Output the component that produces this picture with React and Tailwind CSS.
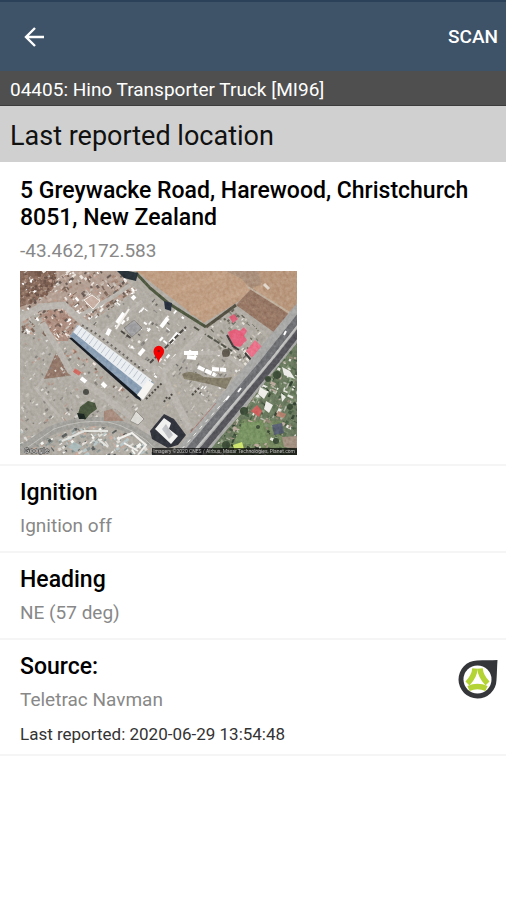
import React from 'react';

const details = [
  { title: 'Ignition', value: 'Ignition off' },
  { title: 'Heading', value: 'NE (57 deg)' },
];

// patches of small objects scattered over the yards, roads and gardens
const patches = [
  { id: 'yard-nw', area: '0,0 98,0 118,20 56,60 46,68 0,62', count: 620, size: 4, angle: -38, colors: ['#ece6e0', '#a88a7a', '#80695c', '#c4b0a4', '#6b5d56', '#ffffff', '#bd9c8c', '#c9c3bb'] },
  { id: 'scrub-nw', area: '0,0 38,0 32,22 12,34 0,38', count: 150, size: 5, angle: 10, colors: ['#7d5f50', '#8f7060', '#6b5248', '#9c8070'] },
  { id: 'yard-n', area: '98,8 148,32 182,62 228,92 190,128 140,110 62,52', count: 420, size: 4, angle: -50, colors: ['#c6c2bb', '#8b8782', '#f0eeea', '#a8a39c', '#6d6a66', '#d0ccc5', '#ffffff'] },
  { id: 'yard-w', area: '0,64 46,72 78,100 120,134 110,150 60,146 0,180', count: 380, size: 3, angle: -40, colors: ['#a5a19a', '#d2cfc9', '#87837d', '#e4e2dd', '#c1bcb5', '#b39a8d'] },
  { id: 'sheds', area: '22,40 48,30 54,56 48,70 90,104 124,136 110,128 72,106 40,80 22,60', count: 210, size: 4, angle: 40, colors: ['#b48e7e', '#9b7869', '#d2b5a8', '#f4eae3', '#6e5a51'] },
  { id: 'yard-s', area: '0,184 0,160 30,168 60,154 100,158 128,170 136,184', count: 300, size: 5, angle: -35, colors: ['#f6f6f3', '#8a9492', '#b9c6c7', '#5c605e', '#cbaa9b', '#dedcd6', '#a5a29b'] },
  { id: 'yard-e', area: '160,96 222,100 206,122 170,166 140,142', count: 130, size: 3, angle: -50, colors: ['#aaa69f', '#d0ccc5', '#88847e', '#c5bbab'] },
  { id: 'redroofs', area: '188,56 214,36 244,64 228,96 200,84', count: 130, size: 4, angle: 45, colors: ['#cdc7bd', '#8d887c', '#e8e3db', '#69655c'] },
  { id: 'gardens', area: '277,64 277,184 188,184 226,138', count: 620, size: 5, angle: 25, colors: ['#5c7252', '#4a5e44', '#7d8e70', '#b4b7a9', '#e9e9e3', '#8fa083', '#384635', '#958878', '#bcac9f'] },
];

const createRandom = (seed) => {
  let s = seed;
  return () => {
    s = (s * 16807) % 2147483647;
    return s / 2147483647;
  };
};

const buildPieces = (patch, index) => {
  const rnd = createRandom(4099 + index * 7919);
  const pts = patch.area.split(' ').map((p) => p.split(',').map(Number));
  const xs = pts.map((p) => p[0]);
  const ys = pts.map((p) => p[1]);
  const x0 = Math.min(...xs);
  const y0 = Math.min(...ys);
  const w = Math.max(...xs) - x0;
  const h = Math.max(...ys) - y0;
  return Array.from({ length: patch.count }, () => ({
    x: x0 + rnd() * w,
    y: y0 + rnd() * h,
    w: 1 + rnd() * patch.size,
    h: 0.8 + rnd() * patch.size * 0.5,
    fill: patch.colors[Math.floor(rnd() * patch.colors.length)],
    flip: rnd() > 0.7 ? 90 : 0,
  }));
};

const scenery = patches.map((patch, i) => ({ ...patch, pieces: buildPieces(patch, i) }));

const roofLines = Array.from({ length: 19 }, (_, i) => i * 4);

const SatelliteMap = () => (
  <svg viewBox="0 0 277 184" className="block w-full h-auto" role="img" aria-label="Satellite map of the last reported location">
    <defs>
      {scenery.map((p) => (
        <clipPath key={p.id} id={p.id}>
          <polygon points={p.area} />
        </clipPath>
      ))}
      <clipPath id="map-frame">
        <rect width="277" height="184" />
      </clipPath>
      <filter id="soften" x="0" y="0" width="100%" height="100%">
        <feGaussianBlur stdDeviation="0.7" />
      </filter>
      <filter id="grain" x="0" y="0" width="100%" height="100%" colorInterpolationFilters="sRGB">
        <feTurbulence type="fractalNoise" baseFrequency="0.3" numOctaves="3" seed="8" />
        <feColorMatrix type="saturate" values="0" />
        <feComponentTransfer>
          <feFuncA type="linear" slope="0" intercept="0.25" />
        </feComponentTransfer>
      </filter>
    </defs>

    <g clipPath="url(#map-frame)">
      <g filter="url(#soften)">
        <rect width="277" height="184" fill="#b1ada5" />

        {/* ground */}
        <polygon points="0,0 98,0 116,20 56,56 46,66 20,44 0,38" fill="#b39f93" />
        <polygon points="0,0 36,0 30,20 12,32 0,36" fill="#856a5c" />
        <polygon points="22,44 48,34 54,54 48,70 36,70" fill="#ad8f81" />
        <polygon points="36,82 54,104 24,108" fill="#94786a" />
        <polygon points="277,62 277,184 184,184 224,140" fill="#6c7c60" />
        <polygon points="222,148 262,150 266,184 204,184" fill="#74885e" />

        {scenery.map((p) => (
          <g key={p.id} clipPath={`url(#${p.id})`}>
            {p.pieces.map((b, i) => (
              <rect key={i} x={b.x} y={b.y} width={b.w} height={b.h} fill={b.fill} transform={`rotate(${p.angle + b.flip} ${b.x} ${b.y})`} />
            ))}
          </g>
        ))}

        {/* fields and hedge */}
        <polygon points="116,0 277,0 277,40 256,62 232,22 184,52" fill="#bf9e83" />
        <path d="M150 22 L205 4 M170 42 L228 18" stroke="#c4a388" strokeWidth="6" />
        <polygon points="206,0 250,0 240,14 230,18 222,8" fill="#ab917d" />
        <polygon points="238,0 277,0 277,36 268,42 244,20" fill="#b8977d" />
        <polygon points="232,17 270,44 255,62 216,34" fill="#977765" />
        <path d="M222 32 L252 52 M228 26 L260 50" stroke="#9e7e6b" strokeWidth="3" />
        <path d="M228 16 L270 42" stroke="#bfb09e" strokeWidth="2" />
        <path d="M244 13 l5 5" stroke="#e3d9ce" strokeWidth="3" />
        <path d="M116 2 L130 17 L148 32 L186 56" stroke="#4f5841" strokeWidth="3" fill="none" />
        <path d="M97 0 L104 7 L116 10 L118 2 L108 0 Z" fill="#29353a" />
        <path d="M144 30 l8 2 l-1 8 l-6 -2 Z" fill="#2a3340" />
        <path d="M186 56 L216 34" stroke="#565345" strokeWidth="3" />
        <path d="M174 56 L196 70 L212 80" stroke="#55564b" strokeWidth="2" strokeDasharray="6 2" />

        {/* yard lanes */}
        <g stroke="#bbb7b0" fill="none">
          <path d="M0 48 L20 36 L44 34 L58 47 L112 86 L142 102 L164 146 L170 158" strokeWidth="7" />
          <path d="M58 46 L96 24 L110 14" strokeWidth="4" />
          <path d="M142 102 L168 76 L184 60" strokeWidth="6" />
          <path d="M74 68 L122 30" strokeWidth="3" />
          <path d="M22 52 L38 78 L50 100 L106 142 L140 172" strokeWidth="6" />
          <path d="M148 98 L160 82 L204 82 L226 98 L188 142" strokeWidth="4" />
          <path d="M24 108 L16 118 L40 146" strokeWidth="3" />
        </g>
        <path d="M0 180 L30 160 Q58 148 88 151 Q116 156 144 182" stroke="#a3a19c" strokeWidth="9" fill="none" />
        <path d="M8 176 L34 158 Q60 148 88 151 Q114 156 138 180" stroke="#c2c0bb" strokeWidth="1" fill="none" />

        {/* warehouse */}
        <polygon points="49,67 54,66 120,125 121,130 116,127" fill="#191d24" />
        <polygon points="50,65 58,54 134,112 122,128" fill="#8b9fb4" />
        <polygon points="53,61 59,54 132,109 125,119" fill="#eceff2" />
        <g stroke="#bec7d2" strokeWidth="1">
          {roofLines.map((x) => (
            <line key={x} x1={58 + x} y1={54 + x * 0.76} x2={53 + x} y2={61 + x * 0.76} />
          ))}
        </g>
        <polygon points="117,124 128,109 134,113 123,129" fill="#f6f5f2" />
        <path d="M62 54 L78 64 L104 84 L126 102" stroke="#6a6661" strokeWidth="2" strokeDasharray="2 3" fill="none" />

        {/* sheds and trucks */}
        <g stroke="#ffffff" strokeWidth="4" fill="none">
          <path d="M97 52 L104 42 M112 28 L115 25 M87 64 L90 58 M141 56 L148 47 M150 72 L158 62 M119 84 L124 78" />
          <path d="M164 82 L178 82 M167 86 L176 87 M82 112 L86 116 M61 107 L66 111" />
        </g>
        <path d="M96 58 L109 38" stroke="#f4f1ec" strokeWidth="2" />
        <path d="M101 60 L112 68 M130 92 L166 56" stroke="#4d4944" strokeWidth="2" strokeDasharray="5 2" />
        <path d="M104 57 l10 -8 l8 8 l-10 9 Z" fill="#a0a0a2" stroke="#8a8783" />
        <path d="M54 99 l6 4" stroke="#d0685f" strokeWidth="4" />
        <path d="M64 29 l8 -5 l8 6 l-7 8 Z" fill="#c9b1a5" stroke="#f4eee9" />
        <path d="M126 128 L142 112 M144 131 l3 -5 M149 128 l3 -5 M172 124 l8 -8" stroke="#4b4843" strokeWidth="2" strokeDasharray="2 2" />
        <path d="M162 103 Q172 98 184 106 Q200 108 212 106 L206 118 Q188 112 164 108 Z" fill="#857e6a" />
        <path d="M178 96 L195 104 M192 98 l14 1" stroke="#ffffff" strokeWidth="4" strokeDasharray="7 1" />
        <circle cx="206" cy="82" r="4" fill="#615a50" />
        <circle cx="66" cy="121" r="3" fill="#4f5048" />
        <path d="M58 143 l2 -7 l8 -6 l7 2 l2 6 l-7 5 l-5 6 Z" fill="#4c5840" />
        <path d="M57 142 l7 1 l2 5 l-7 0 Z" fill="#1d2520" />
        <polygon points="84,140 92,138 104,150 84,150" fill="#a88d7f" />
        <path d="M110 150 l6 -10 l8 8 l-6 6 Z" fill="#dddbd6" stroke="#9a9791" />

        {/* red roofs */}
        <polygon points="209,46 214,43 218,48 213,52" fill="#dc647a" />
        <polygon points="208,61 215,58 220,60 224,56 227,60 224,65 227,69 220,76 214,75 210,68" fill="#e5647e" />
        <polygon points="226,80 235,69 242,76 232,87" fill="#ea7189" />
        <path d="M207 64 L213 75 L219 79 M225 82 L231 89" stroke="#3f3c3b" strokeWidth="2" fill="none" />
        <polygon points="236,66 241,62 246,68 241,73" fill="#aaa69e" />

        {/* main road */}
        <polygon points="277,32 277,72 186,184 152,184" fill="#a9a9a8" />
        <path d="M281 44 L243 92 L165 184" stroke="#707175" strokeWidth="7" fill="none" />
        <path d="M281 58 L256 90 L178 184" stroke="#56575b" strokeWidth="6" fill="none" />
        <path d="M279 53 L250 90 L171 184" stroke="#c4c4c3" strokeWidth="2" fill="none" />
        <path d="M206 128 L160 180" stroke="#f0f0ef" strokeWidth="1" strokeDasharray="4 5" />
        <path d="M218 121 l3 -4 M206 129 l3 -4 M264 64 l2 -4" stroke="#ffffff" strokeWidth="2" />
        <path d="M196 132 L170 162" stroke="#b1837a" strokeWidth="1" />

        {/* dark building by the road */}
        <polygon points="130,160 144,143 154,148 166,164 158,174 148,177 132,168" fill="#33343e" />
        <polygon points="135,158 144,147 151,152 149,158 158,165 151,173" fill="#f2f2f1" />
        <polygon points="142,158 146,153 153,164 149,168" fill="#c3c4c8" />

        {/* houses */}
        <g fill="#eeede9">
          <polygon points="240,116 248,121 244,128 238,123" />
          <polygon points="262,96 270,100 275,108 264,104" />
          <polygon points="246,130 253,134 249,142 244,138" />
          <polygon points="261,122 266,126 262,131" />
        </g>
        <polygon points="231,140 237,134 242,140 239,146" fill="#cf6360" />
        <polygon points="258,140 266,143 264,147 256,145" fill="#b58471" />
        <polygon points="252,154 262,152 264,162 254,164" fill="#596072" />
        <polygon points="262,166 277,165 277,178 264,176" fill="#a39181" />
        <polygon points="222,152 242,150 248,172 214,174" fill="#7a9463" />
        <polygon points="213,174 222,171 224,178 214,179" fill="#cfe66e" />
        <g fill="#3d4e38">
          <circle cx="224" cy="140" r="4" />
          <circle cx="257" cy="104" r="4" />
          <circle cx="248" cy="108" r="3" />
          <circle cx="238" cy="156" r="2" />
          <circle cx="256" cy="170" r="3" />
          <circle cx="206" cy="174" r="4" />
          <circle cx="270" cy="136" r="3" />
        </g>

        {/* southern yard */}
        <path d="M98 168 L112 162 L126 174 L118 184 M104 172 L118 180" stroke="#f3f2ef" strokeWidth="2" fill="none" />
        <path d="M42 170 L64 160 L88 160 M78 168 L88 176" stroke="#e4e4e0" strokeWidth="2" fill="none" />
        <path d="M48 176 l6 -5 l8 4 l-6 6 Z" fill="#aab9b9" />
      </g>

      <rect width="277" height="184" filter="url(#grain)" className="mix-blend-overlay" />

      {/* marker */}
      <path d="M138.500 92 C137.500 86 133.500 85 133.500 80.500 A5 5.500 0 0 1 144 80.500 C144 85 139.500 86 138.500 92 Z" fill="#f50000" />
      <circle cx="138.700" cy="80" r="1.200" fill="#8c1010" />

      <text x="4" y="182" className="font-['Roboto'] text-[8px]" fill="#dddddd" stroke="#333333" strokeWidth="1" paintOrder="stroke">Google</text>
      <rect x="132" y="177" width="145" height="7" fill="#000000" fillOpacity="0.700" />
      <text x="275" y="182" textAnchor="end" className="font-['Roboto'] text-[5px]" fill="#bbbbbb">Imagery ©2020 CNES / Airbus, Maxar Technologies, Planet.com</text>
    </g>
  </svg>
);

const SourceLogo = () => (
  <svg viewBox="0 0 40 40" className="size-10 shrink-0" role="img" aria-label="Teletrac Navman">
    <path d="M39.500 1 C39 7 39 14 38.500 21 A19 19 0 1 1 19 1.500 C26 1 33 1.500 39.500 1 Z" fill="#34363a" />
    <circle cx="19.500" cy="20.500" r="14" fill="#ffffff" />
    <g fill="none" stroke="#b4d334" strokeWidth="5.500">
      <path d="M17 9.500 Q16.500 17 9.500 24.500" />
      <path d="M22 9.500 Q22.500 17 29.500 24.500" />
      <path d="M10.500 29.500 Q19.500 25.500 28.500 29.500" />
    </g>
  </svg>
);

const App = () => {
  return (
    <div className="min-h-screen bg-white font-['Roboto',sans-serif] text-black">
      <header className="flex h-[71px] items-center justify-between border-t-2 border-[#2b4059] bg-[#3e5368] pl-6 pr-2 text-white">
        <button type="button" aria-label="Back">
          <svg viewBox="0 0 20 20" className="size-5" fill="none" stroke="currentColor" strokeWidth="2.400">
            <path d="M20 10 H2 M11 1 L2 10 L11 19" />
          </svg>
        </button>
        <button type="button" className="text-[19px] font-medium leading-6">SCAN</button>
      </header>

      <p className="h-[35px] border-b border-[#3c3c3c] bg-[#4f4f4f] px-[10px] text-[19px] leading-[38px] text-white">
        04405: Hino Transporter Truck [MI96]
      </p>
      <h1 className="h-14 bg-[#d0d0d0] px-[10px] text-[27px] leading-[60px] text-[#111111]">Last reported location</h1>

      <main>
        <section className="border-b-2 border-[#f5f5f5] px-5 pb-[9px] pt-[15px]">
          <h2 className="text-[23px] font-medium leading-[27px]">
            5 Greywacke Road, Harewood, Christchurch 8051, New Zealand
          </h2>
          <p className="mt-2 text-[19px] leading-6 text-[#888888]">-43.462,172.583</p>
          <div className="mt-2 w-[277px]">
            <SatelliteMap />
          </div>
        </section>

        {details.map((item) => (
          <section key={item.title} className="border-b-2 border-[#f5f5f5] px-5 pb-[13px] pt-[13px]">
            <h2 className="text-[23px] font-medium leading-[27px]">{item.title}</h2>
            <p className="mt-2 text-[19px] leading-6 text-[#888888]">{item.value}</p>
          </section>
        ))}

        <section className="flex items-start justify-between border-b-2 border-[#f5f5f5] pb-2 pl-5 pr-2 pt-[13px]">
          <div>
            <h2 className="text-[23px] font-medium leading-[27px]">Source:</h2>
            <p className="mt-2 text-[19px] leading-6 text-[#888888]">Teletrac Navman</p>
            <p className="mt-[10px] text-[17px] leading-6 text-[#333333]">Last reported: 2020-06-29 13:54:48</p>
          </div>
          <div className="mt-[6px]">
            <SourceLogo />
          </div>
        </section>
      </main>
    </div>
  );
};

export default App;
